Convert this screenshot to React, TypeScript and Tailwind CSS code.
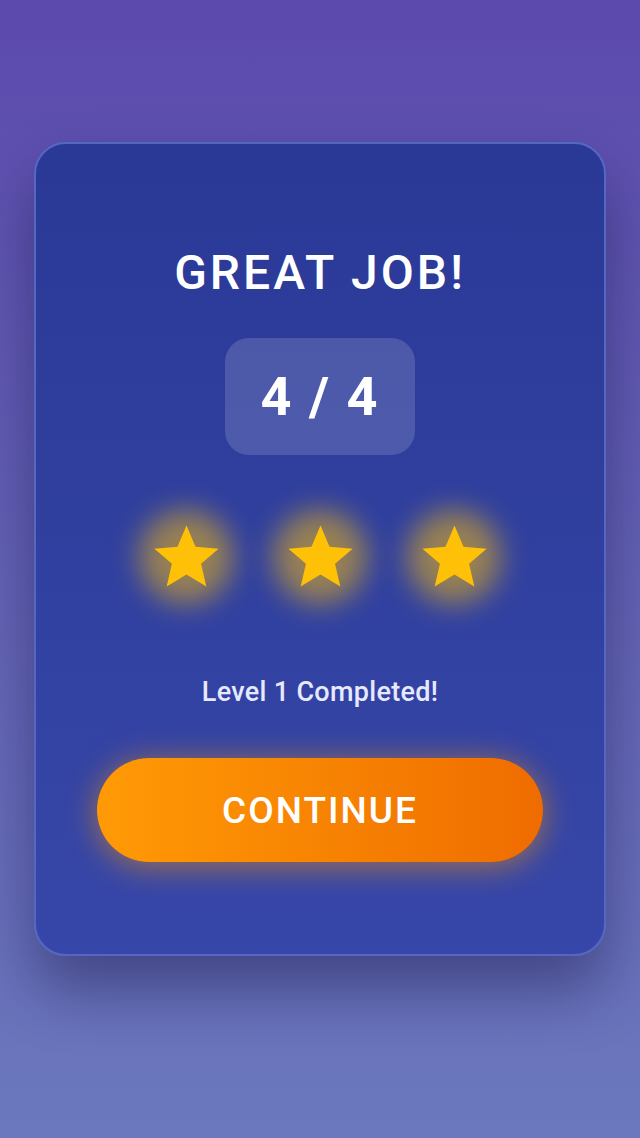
import { Fragment } from "react";

// Material-style sharp star, 24x24 viewBox
function Star() {
  return (
    <div className="relative flex h-[110px] w-[110px] items-center justify-center">
      <div className="absolute inset-[8px] rounded-full bg-[#ffc107]/50 blur-[14px]" />
      <svg className="relative h-[77px] w-[77px]" viewBox="0 0 24 24" fill="#ffc107">
        <path d="M12 17.27L18.18 21l-1.64-7.03L22 9.24l-7.19-.61L12 2 9.19 8.63 2 9.24l5.46 4.73L5.82 21z" />
      </svg>
    </div>
  );
}

export default function App() {
  return (
    <div
      className="flex min-h-[1138px] w-full flex-col items-center bg-gradient-to-b from-[#5c4aad] to-[#6b78bd] pt-[142px]"
      style={{ fontFamily: "Roboto, 'Noto Sans', sans-serif" }}
    >
      <div className="flex h-[814px] w-[572px] flex-col items-center rounded-[32px] border-2 border-[#5567c0] bg-gradient-to-b from-[#2a3996] to-[#3747a9] pt-[105px] shadow-[0_34px_60px_rgba(20,20,70,0.45)]">
        <h1 className="text-[48px] font-medium leading-none tracking-[3px] text-white">
          GREAT JOB!
        </h1>

        <div className="mt-[41px] flex h-[117px] w-[190px] items-center justify-center rounded-[24px] bg-white/15">
          <span className="text-[54px] font-bold leading-none tracking-[2px] text-white">4 / 4</span>
        </div>

        <div className="mt-[47px] flex gap-[24px]">
          {[0, 1, 2].map((i) => (
            <Fragment key={i}>
              <Star />
            </Fragment>
          ))}
        </div>

        <p className="mt-[67px] text-[27px] font-medium leading-none tracking-[0.3px] text-[#e6e9ff]">
          Level 1 Completed!
        </p>

        <button className="mt-[52px] flex h-[104px] w-[446px] items-center justify-center rounded-full bg-gradient-to-r from-[#ff9a05] to-[#ef6c00] shadow-[0_4px_32px_rgba(255,152,0,0.55)]">
          <span className="text-[37px] font-medium leading-none tracking-[2px] text-white">CONTINUE</span>
        </button>
      </div>
    </div>
  );
}
